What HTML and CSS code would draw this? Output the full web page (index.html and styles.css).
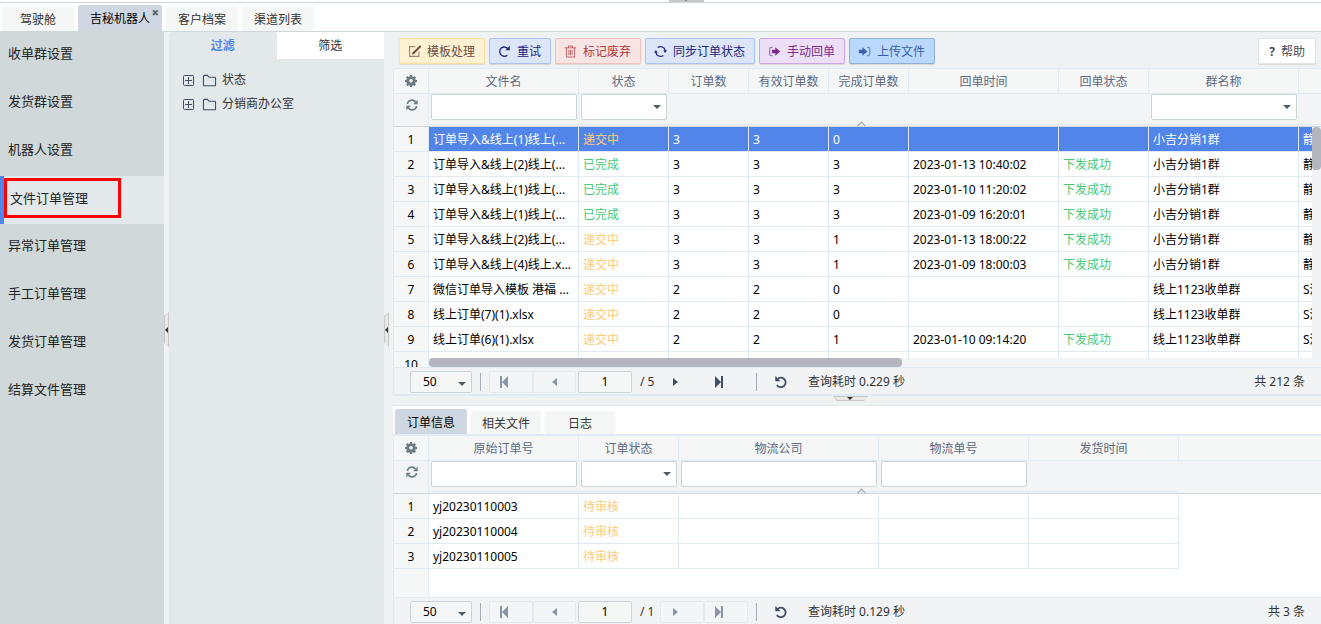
FILE: index.html
```html
<!DOCTYPE html>
<html lang="zh-CN">
<head>
  <meta charset="UTF-8" />
  <meta name="viewport" content="width=device-width, initial-scale=1" />
  <title>文件订单管理</title>
  <link rel="stylesheet" href="styles.css">
</head>
<body>

<svg class="sprite" aria-hidden="true">
  <symbol id="i-edit" viewBox="0 0 16 16"><path d="M13.5 8v6h-11.500v-12H9" fill="none" stroke="currentColor" stroke-width="1.4" opacity=".65"/><path d="M14.8 1.2 6.5 9.5l-1.2 2 2-1.2 8.3-8.3z" fill="none" stroke="currentColor" stroke-width="1.4"/></symbol>
  <symbol id="i-redo" viewBox="0 0 16 16"><path d="M11.500 12.500A5.700 5.700 0 1 1 12.200 4.600" fill="none" stroke="currentColor" stroke-width="1.6"/><path d="M14.5 1v5.4H9.1z" fill="currentColor"/></symbol>
  <symbol id="i-trash" viewBox="0 0 16 16"><path d="M1 3.5h14M5.5 3.500V1.200h5v2.300M3 3.500v11.300h10V3.500M6 6v6.500M8 6v6.500M10 6v6.500" fill="none" stroke="currentColor" stroke-width="1.200" opacity=".75"/></symbol>
  <symbol id="i-sync" viewBox="0 0 16 16"><path d="M4.500 3.200A5.900 5.900 0 0 1 13.800 7M11.500 12.800A5.900 5.900 0 0 1 2.200 9" fill="none" stroke="currentColor" stroke-width="1.500"/><path d="M16 6.500h-4.600l2.300 3.300zM0 9.500h4.600L2.300 6.200z" fill="currentColor"/></symbol>
  <symbol id="i-out" viewBox="0 0 16 16"><path d="M5.500 3H4a2 2 0 0 0-2 2v6a2 2 0 0 0 2 2h1.500" fill="none" stroke="currentColor" stroke-width="1.500" opacity=".6"/><path d="M5 5.800h4V2.800l6 5.200-6 5.200v-3H5z" fill="currentColor"/></symbol>
  <symbol id="i-in" viewBox="0 0 16 16"><path d="M11 3h1.500a2 2 0 0 1 2 2v6a2 2 0 0 1-2 2H11" fill="none" stroke="currentColor" stroke-width="1.500" opacity=".6"/><path d="M1 5.800h4.500V2.800l6 5.200-6 5.200v-3H1z" fill="currentColor"/></symbol>
  <symbol id="i-gear" viewBox="0 0 16 16"><path fill="currentColor" fill-rule="evenodd" d="M6.700 0h2.600l.4 2 1.300.5 1.700-1.100 1.900 1.900-1.100 1.700.5 1.300 2 .4v2.600l-2 .4-.5 1.300 1.100 1.700-1.900 1.900-1.700-1.100-1.300.5-.4 2H6.700l-.4-2-1.300-.5-1.700 1.100-1.900-1.900 1.100-1.700L2 9.700l-2-.4V6.700l2-.4L2.500 5 1.400 3.300l1.900-1.900L5 2.500 6.300 2zM8 5.400a2.400 2.400 0 1 0 0 4.800 2.400 2.400 0 0 0 0-4.800z"/></symbol>
  <symbol id="i-refresh" viewBox="0 0 16 16"><path d="M1.800 6.500A6.200 6.200 0 0 1 12.800 4M14.200 9.500A6.200 6.200 0 0 1 3.200 12" fill="none" stroke="currentColor" stroke-width="2.200"/><path d="M15.500 1v6H9.500zM.500 15V9h6z" fill="currentColor"/></symbol>
  <symbol id="i-folder" viewBox="0 0 16 14"><path d="M1.500 12V2.500a1 1 0 0 1 1-1h3.200L7.500 3.500h6a1 1 0 0 1 1 1V12a.7.7 0 0 1-.7.700H2.200a.7.7 0 0 1-.7-.7z" fill="none" stroke="currentColor" stroke-width="1.200"/></symbol>
  <symbol id="i-plus" viewBox="0 0 11 11"><rect x=".5" y=".5" width="10" height="10" rx="1" fill="none" stroke="currentColor"/><path d="M2 5.500h7M5.500 2v7" stroke="currentColor"/></symbol>
  <symbol id="i-first" viewBox="0 0 12 12"><path d="M2 0h2v12H2zM10 0v12L4 6z" fill="currentColor"/></symbol>
  <symbol id="i-prev" viewBox="0 0 12 12"><path d="M8 2v8L3 6z" fill="currentColor"/></symbol>
  <symbol id="i-next" viewBox="0 0 12 12"><path d="M4 2v8l5-4z" fill="currentColor"/></symbol>
  <symbol id="i-last" viewBox="0 0 12 12"><path d="M8 0h2v12H8zM2 0v12l6-6z" fill="currentColor"/></symbol>
  <symbol id="i-undo" viewBox="0 0 16 16"><path d="M4 4.500a5.500 5.500 0 1 1-.8 7" fill="none" stroke="currentColor" stroke-width="2"/><path d="M1.500 1v6h6z" fill="currentColor"/></symbol>
</svg>

<div class="app">
  <div class="top-line"><span class="handle handle-up"></span></div>

  <nav class="tabs">
    <a href="#" class="tab">驾驶舱</a>
    <a href="#" class="tab active">吉秘机器人<span class="close">✖</span></a>
    <a href="#" class="tab">客户档案</a>
    <a href="#" class="tab">渠道列表</a>
  </nav>

  <div class="workspace">
    <nav class="sidebar">
      <a href="#">收单群设置</a>
      <a href="#">发货群设置</a>
      <a href="#">机器人设置</a>
      <a href="#" class="active"><span>文件订单管理</span></a>
      <a href="#">异常订单管理</a>
      <a href="#">手工订单管理</a>
      <a href="#">发货订单管理</a>
      <a href="#">结算文件管理</a>
    </nav>

    <div class="splitter"><span class="handle handle-left"></span></div>

    <aside class="filter">
      <div class="filter-tabs">
        <button class="active">过滤</button>
        <button>筛选</button>
      </div>
      <ul class="tree">
        <li><svg class="plus"><use href="#i-plus"/></svg><svg class="folder"><use href="#i-folder"/></svg>状态</li>
        <li><svg class="plus"><use href="#i-plus"/></svg><svg class="folder"><use href="#i-folder"/></svg>分销商办公室</li>
      </ul>
    </aside>

    <div class="splitter wide"><span class="handle handle-left"></span></div>

    <main class="content">
      <div class="toolbar">
        <button class="btn yellow"><svg><use href="#i-edit"/></svg>模板处理</button>
        <button class="btn blue"><svg><use href="#i-redo"/></svg>重试</button>
        <button class="btn red"><svg><use href="#i-trash"/></svg>标记废弃</button>
        <button class="btn blue"><svg><use href="#i-sync"/></svg>同步订单状态</button>
        <button class="btn purple"><svg><use href="#i-out"/></svg>手动回单</button>
        <button class="btn sky"><svg><use href="#i-in"/></svg>上传文件</button>
        <button class="btn help"><b>?</b>帮助</button>
      </div>

      <section class="grid grid-files">
        <div class="grid-head">
          <table>
            <colgroup><col class="w35"><col class="w150"><col class="w90"><col class="w80"><col class="w80"><col class="w80"><col class="w150"><col class="w90"><col class="w150"><col class="w150"></colgroup>
            <tr>
              <th><svg class="tool"><use href="#i-gear"/></svg></th>
              <th>文件名</th><th>状态</th><th>订单数</th><th>有效订单数</th><th>完成订单数</th><th>回单时间</th><th>回单状态</th><th>群名称</th><th></th>
            </tr>
            <tr class="filters">
              <td><svg class="tool"><use href="#i-refresh"/></svg></td>
              <td><input type="text" aria-label="文件名"></td>
              <td><div class="select"><select aria-label="状态"><option></option></select></div></td>
              <td></td><td></td><td></td><td></td><td></td>
              <td><div class="select"><select aria-label="群名称"><option></option></select></div></td>
              <td></td>
            </tr>
          </table>
          <span class="fold"></span>
        </div>
        <div class="grid-body">
          <table>
            <colgroup><col class="w35"><col class="w150"><col class="w90"><col class="w80"><col class="w80"><col class="w80"><col class="w150"><col class="w90"><col class="w150"><col class="w150"></colgroup>
            <tr class="selected"><th>1</th><td>订单导入&amp;线上(1)线上(...</td><td class="wait">递交中</td><td>3</td><td>3</td><td>0</td><td></td><td></td><td>小吉分销1群</td><td>静</td></tr>
            <tr><th>2</th><td>订单导入&amp;线上(2)线上(...</td><td class="done">已完成</td><td>3</td><td>3</td><td>3</td><td>2023-01-13 10:40:02</td><td class="done">下发成功</td><td>小吉分销1群</td><td>静</td></tr>
            <tr><th>3</th><td>订单导入&amp;线上(1)线上(...</td><td class="done">已完成</td><td>3</td><td>3</td><td>3</td><td>2023-01-10 11:20:02</td><td class="done">下发成功</td><td>小吉分销1群</td><td>静</td></tr>
            <tr><th>4</th><td>订单导入&amp;线上(1)线上(...</td><td class="done">已完成</td><td>3</td><td>3</td><td>3</td><td>2023-01-09 16:20:01</td><td class="done">下发成功</td><td>小吉分销1群</td><td>静</td></tr>
            <tr><th>5</th><td>订单导入&amp;线上(2)线上(...</td><td class="wait">递交中</td><td>3</td><td>3</td><td>1</td><td>2023-01-13 18:00:22</td><td class="done">下发成功</td><td>小吉分销1群</td><td>静</td></tr>
            <tr><th>6</th><td>订单导入&amp;线上(4)线上.x...</td><td class="wait">递交中</td><td>3</td><td>3</td><td>1</td><td>2023-01-09 18:00:03</td><td class="done">下发成功</td><td>小吉分销1群</td><td>静</td></tr>
            <tr><th>7</th><td>微信订单导入模板 港福 ...</td><td class="wait">递交中</td><td>2</td><td>2</td><td>0</td><td></td><td></td><td>线上1123收单群</td><td>S流</td></tr>
            <tr><th>8</th><td>线上订单(7)(1).xlsx</td><td class="wait">递交中</td><td>2</td><td>2</td><td>0</td><td></td><td></td><td>线上1123收单群</td><td>S流</td></tr>
            <tr><th>9</th><td>线上订单(6)(1).xlsx</td><td class="wait">递交中</td><td>2</td><td>2</td><td>1</td><td>2023-01-10 09:14:20</td><td class="done">下发成功</td><td>线上1123收单群</td><td>S流</td></tr>
            <tr><th>10</th><td></td><td></td><td></td><td></td><td></td><td></td><td></td><td></td><td></td></tr>
          </table>
          <div class="vbar"><i></i></div>
          <div class="hbar"><i></i></div>
        </div>
        <div class="pager">
          <div class="select"><select aria-label="每页条数"><option>50</option></select></div>
          <span class="sep"></span>
          <button class="off first" aria-label="首页" disabled><svg><use href="#i-first"/></svg></button>
          <button class="off" aria-label="上一页" disabled><svg><use href="#i-prev"/></svg></button>
          <input type="text" value="1" aria-label="页码">
          <span class="pages">/ 5</span>
          <button class="next" aria-label="下一页"><svg><use href="#i-next"/></svg></button>
          <button class="last" aria-label="末页"><svg><use href="#i-last"/></svg></button>
          <span class="sep"></span>
          <button class="reload" aria-label="刷新"><svg><use href="#i-undo"/></svg></button>
          <span class="time">查询耗时 0.229 秒</span>
          <span class="total">共 212 条</span>
        </div>
      </section>

      <div class="splitter-h"><span class="handle handle-down"></span></div>

      <section class="detail">
        <nav class="detail-tabs">
          <a href="#" class="active">订单信息</a>
          <a href="#">相关文件</a>
          <a href="#">日志</a>
        </nav>
        <div class="grid">
          <div class="grid-head">
            <table>
              <colgroup><col class="w35"><col class="w150"><col class="w100"><col class="w200"><col class="w150"><col class="w150"></colgroup>
              <tr>
                <th><svg class="tool"><use href="#i-gear"/></svg></th>
                <th>原始订单号</th><th>订单状态</th><th>物流公司</th><th>物流单号</th><th>发货时间</th>
              </tr>
              <tr class="filters">
                <td><svg class="tool"><use href="#i-refresh"/></svg></td>
                <td><input type="text" aria-label="原始订单号"></td>
                <td><div class="select"><select aria-label="订单状态"><option></option></select></div></td>
                <td><input type="text" aria-label="物流公司"></td>
                <td><input type="text" aria-label="物流单号"></td>
                <td></td>
              </tr>
            </table>
            <span class="fold"></span>
          </div>
          <div class="grid-body">
            <table>
              <colgroup><col class="w35"><col class="w150"><col class="w100"><col class="w200"><col class="w150"><col class="w150"></colgroup>
              <tr><th>1</th><td>yj20230110003</td><td class="wait">待审核</td><td></td><td></td><td></td></tr>
              <tr><th>2</th><td>yj20230110004</td><td class="wait">待审核</td><td></td><td></td><td></td></tr>
              <tr><th>3</th><td>yj20230110005</td><td class="wait">待审核</td><td></td><td></td><td></td></tr>
            </table>
            <div class="gutter"></div>
          </div>
          <div class="pager">
            <div class="select"><select aria-label="每页条数"><option>50</option></select></div>
            <span class="sep"></span>
            <button class="off first" aria-label="首页" disabled><svg><use href="#i-first"/></svg></button>
            <button class="off" aria-label="上一页" disabled><svg><use href="#i-prev"/></svg></button>
            <input type="text" value="1" aria-label="页码">
            <span class="pages">/ 1</span>
            <button class="off next" aria-label="下一页" disabled><svg><use href="#i-next"/></svg></button>
            <button class="off last" aria-label="末页" disabled><svg><use href="#i-last"/></svg></button>
            <span class="sep"></span>
            <button class="reload" aria-label="刷新"><svg><use href="#i-undo"/></svg></button>
            <span class="time">查询耗时 0.129 秒</span>
            <span class="total">共 3 条</span>
          </div>
        </div>
      </section>
    </main>
  </div>
</div>

</body>
</html>
```

FILE: styles.css
```css
* {
  box-sizing: border-box;
}
body {
  margin: 0;
  color: #000;
  background: #fff;
}
body, button, input, select {
  font-family: "Noto Sans", "Noto Sans CJK SC", sans-serif;
  font-size: 12px;
  line-height: 18px;
}
a {
  color: inherit;
  text-decoration: none;
}
button {
  cursor: pointer;
}
.sprite {
  position: absolute;
  width: 0;
  height: 0;
}
.app {
  display: flex;
  flex-direction: column;
  height: 100vh;
  overflow: hidden;
}

/* tabs */
.top-line {
  position: relative;
  height: 3px;
  flex: none;
  border-bottom: 1px solid #cdd7da;
}
.tabs {
  display: flex;
  align-items: flex-end;
  flex: none;
  gap: 4px;
  height: 29px;
  padding-left: 2px;
  border-bottom: 1px solid #cdd7da;
}
.tab {
  position: relative;
  height: 24px;
  padding: 0 12px;
  min-width: 72px;
  line-height: 25px;
  text-align: center;
  color: #333;
  background: #f5f7f7;
}
.tab.active {
  height: 26px;
  line-height: 27px;
  color: #000;
  background: #cfd8e2;
  border-radius: 2px 2px 0 0;
}
.close {
  position: absolute;
  top: 3px;
  right: 3px;
  font-family: "DejaVu Sans", sans-serif;
  font-size: 9px;
  line-height: 10px;
  color: #5c6970;
}

/* sidebar */
.workspace {
  display: flex;
  flex: 1;
  min-height: 0;
}
.sidebar {
  width: 164px;
  flex: none;
  background: #d0d8da;
}
.sidebar a {
  display: block;
  height: 48px;
  padding-left: 8px;
  font-size: 13px;
  line-height: 43px;
  color: #222;
}
.sidebar a.active {
  padding: 2px 0 0;
  background: #e3e8eb;
  border-left: 4px solid #5285ea;
}
.sidebar a.active span {
  display: inline-block;
  width: 117px;
  height: 40px;
  padding-left: 3px;
  line-height: 34px;
  vertical-align: top;
  border: 3px solid #f00;
}

/* splitters */
.splitter {
  position: relative;
  width: 5px;
  flex: none;
  background: #eef2f3;
}
.splitter.wide {
  width: 9px;
}
.splitter-h {
  position: relative;
  height: 9px;
  flex: none;
}
.handle {
  position: absolute;
  background: #c8c8c8;
}
.handle::before {
  content: "";
  position: absolute;
  inset: 1px;
  background: #e9e9e9;
  clip-path: inherit;
}
.handle::after {
  content: "";
  position: absolute;
  border: 3px solid transparent;
}
.handle-left {
  top: 280px;
  left: 0;
  width: 5px;
  height: 35px;
  clip-path: polygon(100% 0, 100% 100%, 0 31px, 0 4px);
}
.handle-left::after {
  top: 15px;
  left: -2px;
  border-right-color: #333;
}
.handle-down {
  top: 0;
  left: calc(50% - 24px);
  width: 35px;
  height: 5px;
  clip-path: polygon(0 0, 100% 0, 31px 100%, 4px 100%);
}
.handle-down::after {
  top: 1px;
  left: 14px;
  border-top-color: #333;
}
.handle-up {
  top: 0;
  left: calc(50% + 8px);
  width: 35px;
  height: 2px;
}
.handle-up::after {
  top: -1px;
  left: 15px;
  border-width: 2px;
  border-top-color: #333;
}

/* filter panel */
.filter {
  width: 215px;
  flex: none;
  background: #e3e8eb;
}
.filter-tabs {
  display: flex;
  height: 27px;
  background: #fff;
}
.filter-tabs button {
  flex: 1;
  padding: 0;
  border: 0;
  color: #333;
  background: #fff;
}
.filter-tabs .active {
  color: #5285ea;
  font-weight: bold;
  background: #e3e8eb;
  border-radius: 3px 3px 0 0;
}
.tree {
  margin: 0;
  padding: 9px 0 0 14px;
  list-style: none;
}
.tree li {
  display: flex;
  align-items: center;
  height: 24px;
  color: #333;
}
.tree svg {
  color: #3f4d68;
}
.plus {
  width: 11px;
  height: 11px;
  margin-right: 8px;
}
.folder {
  width: 15px;
  height: 13px;
  margin-right: 5px;
}

/* toolbar */
.content {
  display: flex;
  flex-direction: column;
  flex: 1;
  min-width: 0;
  background: #eef2f3;
}
.toolbar {
  display: flex;
  flex: none;
  gap: 4px;
  height: 36px;
  padding: 6px 5px 4px 6px;
}
.btn {
  display: flex;
  align-items: center;
  gap: 6px;
  height: 26px;
  padding: 1px 9px 0 8px;
  white-space: nowrap;
  border: 1px solid;
  border-radius: 2px;
  box-shadow: 0 1px 1px rgba(0, 0, 0, .1);
}
.btn svg {
  width: 13px;
  height: 13px;
}
.yellow {
  color: #6d4c41;
  background: #fff2d3;
  border-color: #ffdf9c;
}
.blue {
  color: #1a237e;
  background: #dde6f8;
  border-color: #a9c1f3;
}
.red {
  color: #b13a3e;
  background: #f9e4e4;
  border-color: #f2c0c0;
}
.purple {
  color: #7b2a8e;
  background: #ecdff7;
  border-color: #d1a5ee;
}
.sky {
  color: #3a5fae;
  background: #bbd9ff;
  border-color: #90b0dd;
}
.help {
  margin-left: auto;
  padding: 1px 10px 0;
  color: #444c55;
  background: #fff;
  border-color: #dfe5e8;
}

/* grids */
.grid {
  display: flex;
  flex-direction: column;
  border-left: 1px solid #e0eaf3;
}
.grid-files {
  flex: 1;
  min-height: 0;
  border-top: 1px solid #e0eaf3;
  border-bottom: 2px solid #e0eaf3;
}
.grid-head {
  position: relative;
  flex: none;
  overflow: hidden;
  height: 58px;
  background: linear-gradient(#f5f7f7 24px, #e0eaf3 24px, #e0eaf3 25px, #f2f4f6 25px);
  border-bottom: 1px solid #cdd7da;
}
.grid table {
  width: 0;
  table-layout: fixed;
  border-collapse: separate;
  border-spacing: 0;
}
.w35 { width: 35px; }
.w80 { width: 80px; }
.w90 { width: 90px; }
.w100 { width: 100px; }
.w150 { width: 150px; }
.w200 { width: 200px; }
.grid th, .grid td {
  height: 25px;
  padding: 2px 4px 0;
  overflow: hidden;
  white-space: nowrap;
  border-right: 1px solid #e0eaf3;
  border-bottom: 1px solid #e0eaf3;
}
.grid th {
  padding: 2px 0 0;
  font-weight: normal;
  text-align: center;
  background: #f5f7f7;
}
.grid-head th {
  color: #5d6880;
}
.grid .filters td {
  height: 31px;
  padding: 0 1px 0 2px;
  vertical-align: top;
  border-right-color: transparent;
}
.grid .filters td:first-child {
  padding: 3px 0 0 2px;
  text-align: center;
  border-right-color: #e0eaf3;
  border-bottom-color: transparent;
}
.tool {
  width: 12px;
  height: 12px;
  color: #6c7a82;
  vertical-align: -1px;
}
.filters input, .select select {
  display: block;
  width: 100%;
  height: 26px;
  padding: 0 6px;
  background: #fff;
  border: 1px solid #c9d5d8;
  border-radius: 2px;
  appearance: none;
}
.select {
  position: relative;
}
.select::after {
  content: "";
  position: absolute;
  top: 11px;
  right: 6px;
  border: 4px solid transparent;
  border-top-color: #4f5e66;
  border-bottom: 0;
  pointer-events: none;
}
.fold {
  position: absolute;
  left: 50%;
  bottom: -4px;
  width: 7px;
  height: 7px;
  border: 1px solid #98a1a6;
  border-right: 0;
  border-bottom: 0;
  transform: rotate(45deg);
}
.grid-body {
  position: relative;
  flex: 1;
  min-height: 0;
  overflow: hidden;
  background: #fff;
}
.done {
  color: #46c973;
}
.wait {
  color: #fdcb7a;
}
.selected td {
  color: #fff;
  background: #5285ea;
}
.selected .wait {
  color: #fdcb7a;
}
.vbar {
  position: absolute;
  top: 0;
  right: 0;
  bottom: 0;
  width: 9px;
  background: #f1f3f5;
}
.vbar i {
  display: block;
  height: 43px;
  background: #b3b5bf;
  border-radius: 4px;
}
.hbar {
  position: absolute;
  left: 35px;
  right: 0;
  bottom: 0;
  height: 9px;
  background: #f1f3f5;
}
.hbar i {
  display: block;
  width: 53%;
  height: 9px;
  background: #b3b5bf;
  border-radius: 4px;
}

/* pager */
.pager {
  display: flex;
  align-items: center;
  flex: none;
  height: 27px;
  padding: 1px 16px 0;
  color: #333;
  background: #f1f3f5;
  border-top: 1px solid #e0eaf3;
}
.pager .select {
  width: 62px;
}
.pager .select select {
  height: 22px;
  padding-left: 12px;
  background: #f5f7f7;
}
.pager .select::after {
  top: 11px;
}
.pager .sep {
  width: 1px;
  height: 18px;
  margin: 0 8px;
  background: #a5adb8;
}
.pager button {
  display: flex;
  align-items: center;
  justify-content: center;
  width: 43px;
  height: 22px;
  padding: 0;
  color: #3f4d68;
  background: none;
  border: 1px solid transparent;
  border-radius: 2px;
}
.pager button.first, .pager button.last, .pager button.next {
  width: 44px;
  padding-right: 14px;
}
.pager .off {
  color: #8a94a8;
  background: #f3f5f6;
  border-color: #e3e9ed;
}
.pager svg {
  width: 12px;
  height: 12px;
}
.pager input {
  width: 54px;
  height: 22px;
  margin-left: 2px;
  padding: 0;
  text-align: center;
  background: #f5f7f7;
  border: 1px solid #cdd7da;
  border-radius: 2px;
}
.pages {
  width: 28px;
  padding-left: 8px;
}
.pager button.reload {
  width: 32px;
}
.reload svg {
  width: 14px;
  height: 14px;
}
.time {
  margin-left: 11px;
}
.total {
  margin-left: auto;
}

/* detail */
.detail {
  flex: none;
  border-top: 1px solid #e0eaf3;
}
.detail-tabs {
  display: flex;
  align-items: flex-end;
  gap: 4px;
  height: 30px;
  padding: 0 2px;
  background: #fff;
  border-bottom: 2px solid #e0eaf3;
}
.detail-tabs a {
  width: 70px;
  height: 23px;
  line-height: 25px;
  text-align: center;
  color: #333;
  background: #f5f7f7;
}
.detail-tabs .active {
  width: 72px;
  height: 25px;
  line-height: 27px;
  color: #000;
  background: #cfd8e2;
  border-radius: 2px 2px 0 0;
}
.detail .grid-body {
  display: flex;
  flex-direction: column;
  min-height: 103px;
}
.gutter {
  width: 35px;
  flex: 1;
  background: #f5f7f7;
  border-right: 1px solid #e0eaf3;
}
```
